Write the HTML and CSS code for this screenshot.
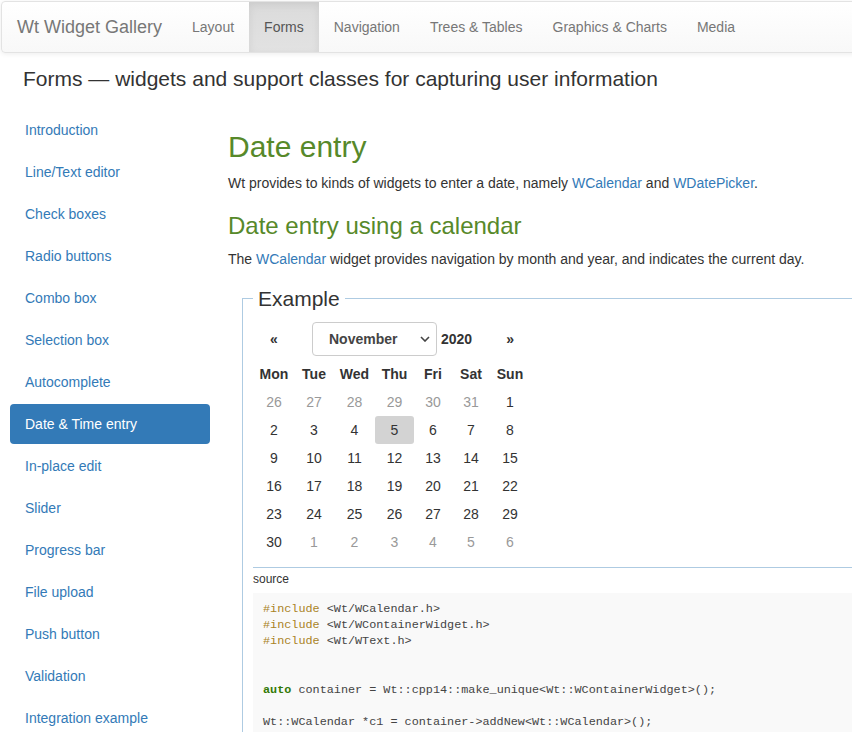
FILE: index.html
```html
<!DOCTYPE html>
<html lang="en">
<head>
<meta charset="utf-8">
<title>Wt Widget Gallery</title>
<link rel="stylesheet" href="styles.css">
</head>
<body>
<nav class="navbar">
  <a class="brand" href="#">Wt Widget Gallery</a>
  <ul class="nav">
    <li><a href="#">Layout</a></li>
    <li class="active"><a href="#">Forms</a></li>
    <li><a href="#">Navigation</a></li>
    <li><a href="#">Trees &amp; Tables</a></li>
    <li><a href="#">Graphics &amp; Charts</a></li>
    <li><a href="#">Media</a></li>
  </ul>
</nav>
<h3 class="page-title">Forms — widgets and support classes for capturing user information</h3>
<div class="layout">
  <ul class="side-nav">
    <li><a href="#">Introduction</a></li>
    <li><a href="#">Line/Text editor</a></li>
    <li><a href="#">Check boxes</a></li>
    <li><a href="#">Radio buttons</a></li>
    <li><a href="#">Combo box</a></li>
    <li><a href="#">Selection box</a></li>
    <li><a href="#">Autocomplete</a></li>
    <li class="active"><a href="#">Date &amp; Time entry</a></li>
    <li><a href="#">In-place edit</a></li>
    <li><a href="#">Slider</a></li>
    <li><a href="#">Progress bar</a></li>
    <li><a href="#">File upload</a></li>
    <li><a href="#">Push button</a></li>
    <li><a href="#">Validation</a></li>
    <li><a href="#">Integration example</a></li>
  </ul>
  <main class="content">
    <h1>Date entry</h1>
    <p>Wt provides to kinds of widgets to enter a date, namely <a href="#">WCalendar</a> and <a href="#">WDatePicker</a>.</p>
    <h2>Date entry using a calendar</h2>
    <p>The <a href="#">WCalendar</a> widget provides navigation by month and year, and indicates the current day.</p>
    <fieldset class="example">
      <legend>Example</legend>
      <div class="calendar">
        <div class="cal-nav">
          <span class="cal-prev">«</span>
          <div class="month-select">
            <span>November</span>
            <svg class="chev" width="10" height="6" viewBox="0 0 10 6"><path d="M1 1 L5 5 L9 1" fill="none" stroke="#444" stroke-width="1.6"/></svg>
          </div>
          <span class="cal-year">2020</span>
          <span class="cal-next">»</span>
        </div>
        <div class="cal-grid">
          <div class="dow">Mon</div><div class="dow">Tue</div><div class="dow">Wed</div><div class="dow">Thu</div><div class="dow">Fri</div><div class="dow">Sat</div><div class="dow">Sun</div>
          <div class="day other">26</div><div class="day other">27</div><div class="day other">28</div><div class="day other">29</div><div class="day other">30</div><div class="day other">31</div><div class="day">1</div>
          <div class="day">2</div><div class="day">3</div><div class="day">4</div><div class="day today">5</div><div class="day">6</div><div class="day">7</div><div class="day">8</div>
          <div class="day">9</div><div class="day">10</div><div class="day">11</div><div class="day">12</div><div class="day">13</div><div class="day">14</div><div class="day">15</div>
          <div class="day">16</div><div class="day">17</div><div class="day">18</div><div class="day">19</div><div class="day">20</div><div class="day">21</div><div class="day">22</div>
          <div class="day">23</div><div class="day">24</div><div class="day">25</div><div class="day">26</div><div class="day">27</div><div class="day">28</div><div class="day">29</div>
          <div class="day">30</div><div class="day other">1</div><div class="day other">2</div><div class="day other">3</div><div class="day other">4</div><div class="day other">5</div><div class="day other">6</div>
        </div>
      </div>
      <hr class="sep">
      <div class="source-label">source</div>
<pre class="code"><span class="kw-pp">#include</span> &lt;Wt/WCalendar.h&gt;
<span class="kw-pp">#include</span> &lt;Wt/WContainerWidget.h&gt;
<span class="kw-pp">#include</span> &lt;Wt/WText.h&gt;


<span class="kw">auto</span> container = Wt::cpp14::make_unique&lt;Wt::WContainerWidget&gt;();

Wt::WCalendar *c1 = container-&gt;addNew&lt;Wt::WCalendar&gt;();
</pre>
    </fieldset>
  </main>
</div>
</body>
</html>
```
FILE: styles.css
```css
html, body {
  margin: 0;
  padding: 0;
  overflow: hidden;
}

body {
  font-family: "Liberation Sans", Arial, sans-serif;
  font-size: 14px;
  line-height: 20px;
  color: #333;
  background: #fff;
}

a {
  color: #337ab7;
  text-decoration: none;
}

/* Top navbar */
.navbar {
  display: flex;
  width: 920px;
  height: 50px;
  margin: 1px 0 0 1px;
  border: 1px solid #e3e3e3;
  border-radius: 4px;
  background: linear-gradient(to bottom, #ffffff 0%, #f8f8f8 100%);
  box-shadow: inset 0 1px 0 rgba(255,255,255,.15), 0 1px 5px rgba(0,0,0,.075);
}

.brand {
  padding: 15px;
  font-size: 18px;
  line-height: 20px;
  color: #777;
}

.nav {
  display: flex;
  list-style: none;
  margin: 0;
  padding: 0;
}

.nav a {
  display: block;
  padding: 15px;
  line-height: 20px;
  color: #777;
}

.nav .active a {
  color: #555;
  background: linear-gradient(to bottom, #dbdbdb 0%, #e2e2e2 100%);
  box-shadow: inset 0 3px 9px rgba(0,0,0,.075);
}

.page-title {
  margin: 15px 0 0;
  padding-left: 23px;
  font-size: 21px;
  line-height: 22px;
  font-weight: normal;
  color: #333;
}

/* Two-column layout */
.layout {
  display: flex;
  margin-top: 20px;
}

.side-nav {
  flex-shrink: 0;
  width: 200px;
  margin: 0 0 0 10px;
  padding: 0;
  list-style: none;
}

.side-nav li + li {
  margin-top: 2px;
}

.side-nav a {
  display: block;
  padding: 10px 15px;
  border-radius: 4px;
  color: #337ab7;
}

.side-nav .active a {
  background: #337ab7;
  color: #fff;
}

.content {
  flex-shrink: 0;
  width: 700px;
  margin-left: 18px;
}

.content h1 {
  margin: 20px 0 10px;
  font-size: 30px;
  line-height: 33px;
  font-weight: normal;
  color: #57892a;
}

.content h2 {
  margin: 20px 0 10px;
  font-size: 24px;
  line-height: 26px;
  font-weight: normal;
  color: #57892a;
}

.content p {
  margin: 0 0 10px;
}

/* Example fieldset */
.example {
  margin: 18px 0 0 14px;
  padding: 12px 10px 0 10px;
  border: 1px solid #aecbe2;
  min-width: 0;
}

.example legend {
  padding: 0 5px;
  font-size: 21px;
  line-height: 23px;
  color: #333;
}

.calendar {
  margin-left: 1px;
}

.cal-nav {
  display: flex;
  align-items: center;
  height: 34px;
}

.cal-prev {
  width: 40px;
  text-align: center;
  font-weight: bold;
}

.month-select {
  box-sizing: border-box;
  display: flex;
  align-items: center;
  justify-content: space-between;
  width: 125px;
  height: 34px;
  margin-left: 18px;
  padding: 0 6px 0 16px;
  border: 1px solid #ccc;
  border-radius: 4px;
  font-weight: bold;
  color: #444;
}

.chev {
  display: block;
}

.cal-year {
  margin-left: 4px;
  font-weight: bold;
}

.cal-next {
  margin-left: 34px;
  font-weight: bold;
}

.cal-grid {
  display: grid;
  grid-template-columns: 40px 40px 41px 39px 38px 38px 40px;
  grid-auto-rows: 28px;
  margin-top: 4px;
}

.cal-grid > div {
  display: flex;
  align-items: center;
  justify-content: center;
}

.dow {
  font-weight: bold;
}

.day {
  color: #333;
}

.day.other {
  color: #999;
}

.day.today {
  background: #d3d3d3;
  border-radius: 3px;
}

.sep {
  margin: 11px 0 0;
  border: 0;
  border-top: 1px solid #aecbe2;
  height: 0;
}

.source-label {
  margin-top: 3px;
  font-size: 12px;
  line-height: 16px;
  color: #333;
}

.code {
  margin: 6px 0 0;
  padding: 8px 10px;
  background: #f9f9f9;
  font-family: "Liberation Mono", "DejaVu Sans Mono", monospace;
  font-size: 11.8px;
  line-height: 16.2px;
  color: #444;
}

.kw-pp {
  color: #a9831f;
}

.kw {
  color: #337a06;
  font-weight: bold;
}
```
